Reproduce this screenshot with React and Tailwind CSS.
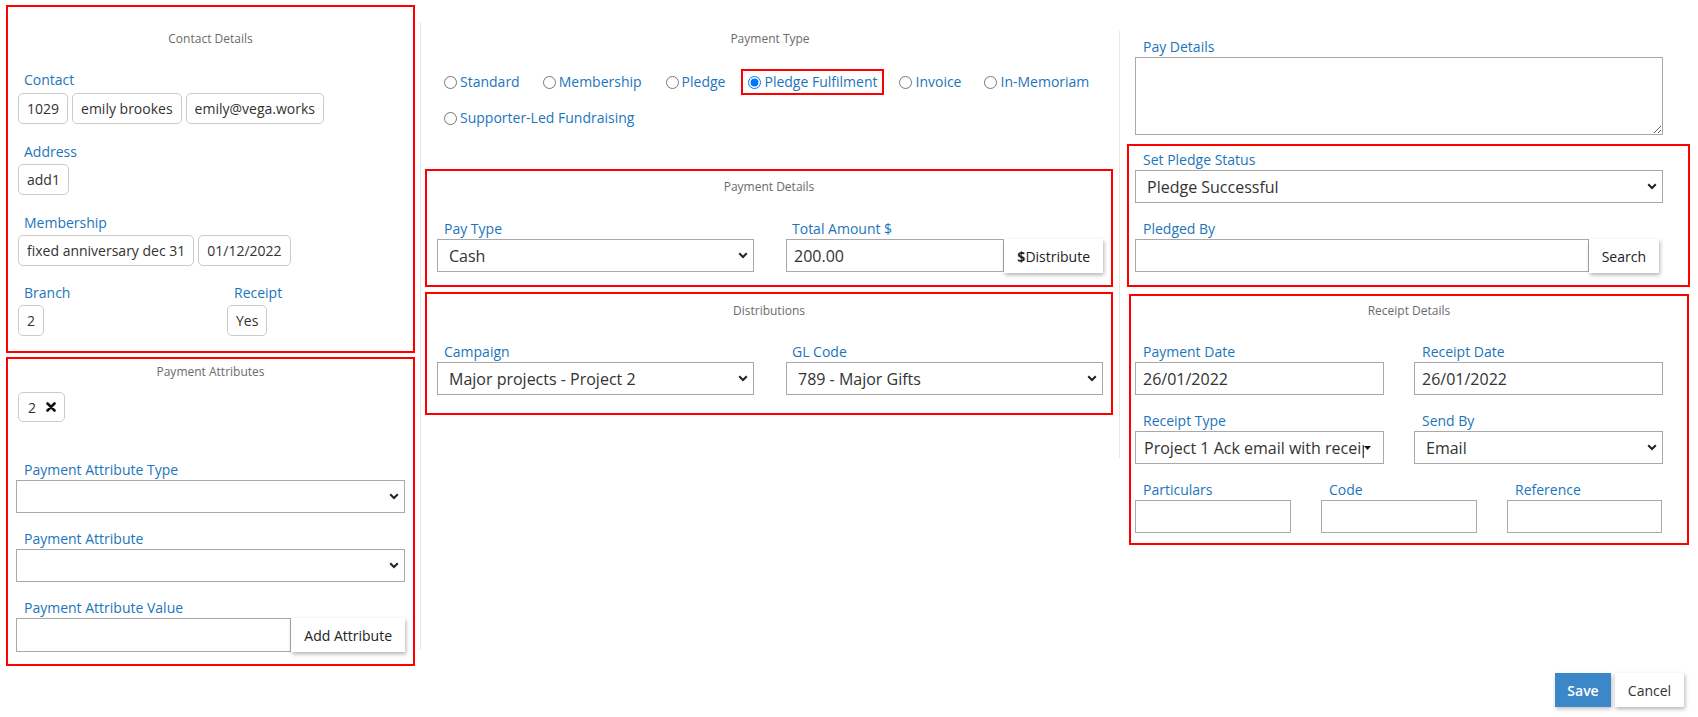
import React from "react";

const RADIOS = [
    { label: "Standard", ml: "ml-0" },
    { label: "Membership", ml: "ml-[23px]" },
    { label: "Pledge", ml: "ml-[24px]" },
    { label: "Pledge Fulfilment", ml: "ml-[16px]", checked: true },
    { label: "Invoice", ml: "ml-[15px]" },
    { label: "In-Memoriam", ml: "ml-[23px]" },
];

// ─── Small building blocks ─────────────────────────────────
const Box = ({ className = "", children }) => (
    <div className={`border-2 border-[#ff0000] ${className}`}>{children}</div>
);

const Title = ({ className = "", children }) => (
    <div className={`text-center text-[12px] leading-[16px] text-[#6b6b6b] ${className}`}>{children}</div>
);

const Label = ({ className = "", children }) => (
    <div className={`h-[20px] whitespace-nowrap text-[14px] leading-[20px] text-[#1c75bc] ${className}`}>{children}</div>
);

const Chip = ({ children }) => (
    <div className="flex h-[31px] items-center rounded-[5px] border border-[#cccccc] px-[8px] text-[14px] text-[#333]">
        {children}
    </div>
);

const Chevron = () => (
    <svg width="10" height="7" viewBox="0 0 10 7" className="shrink-0">
        <path d="M1.2 1.2 L5 5 L8.8 1.2" fill="none" stroke="#222" strokeWidth="2" />
    </svg>
);

const Select = ({ value, className = "" }) => (
    <div className={`flex h-[33px] items-center justify-between border border-[#a9a9a9] bg-white pl-[11px] pr-[5px] text-[16px] text-[#333] ${className}`}>
        <span className="whitespace-nowrap">{value}</span>
        <Chevron />
    </div>
);

const Input = ({ value = "", className = "" }) => (
    <div className={`flex h-[33px] items-center border border-[#a9a9a9] bg-white pl-[7px] text-[16px] text-[#333] ${className}`}>
        {value}
    </div>
);

const Button = ({ className = "", children }) => (
    <div className={`flex h-[34px] shrink-0 items-center bg-white px-[13px] text-[14px] text-[#222] shadow-[1px_2px_4px_rgba(0,0,0,0.3)] ${className}`}>
        {children}
    </div>
);

const Radio = ({ label, checked }) => (
    <label className="flex items-center">
        <input type="radio" name="payType" defaultChecked={checked} className="m-0 h-[13px] w-[13px]" />
        <span className="ml-[3px] whitespace-nowrap text-[14px] leading-[20px] text-[#1c75bc]">{label}</span>
    </label>
);

export default function App() {
    return (
        <div className="h-[717px] w-[1698px] overflow-hidden bg-white font-['Open_Sans',sans-serif]">
            <div className="flex items-start pl-[6px] pt-[5px]">
                {/* Left column */}
                <div className="flex w-[409px] shrink-0 flex-col gap-[4px]">
                    <Box className="h-[348px]">
                        <Title className="mt-[24px]">Contact Details</Title>
                        <div className="px-[10px]">
                            <Label className="ml-[6px] mt-[23px]">Contact</Label>
                            <div className="mt-[3px] flex gap-[4px]">
                                <Chip>1029</Chip>
                                <Chip>emily brookes</Chip>
                                <Chip>emily@vega.works</Chip>
                            </div>
                            <Label className="ml-[6px] mt-[18px]">Address</Label>
                            <div className="mt-[2px] flex">
                                <Chip>add1</Chip>
                            </div>
                            <Label className="ml-[6px] mt-[18px]">Membership</Label>
                            <div className="mt-[2px] flex gap-[4px]">
                                <Chip>fixed anniversary dec 31</Chip>
                                <Chip>01/12/2022</Chip>
                            </div>
                            <div className="mt-[17px] flex">
                                <div className="w-[209px]">
                                    <Label className="ml-[6px]">Branch</Label>
                                    <div className="mt-[2px] flex"><Chip>2</Chip></div>
                                </div>
                                <div>
                                    <Label className="ml-[7px]">Receipt</Label>
                                    <div className="mt-[2px] flex"><Chip>Yes</Chip></div>
                                </div>
                            </div>
                        </div>
                    </Box>

                    <Box className="h-[309px]">
                        <Title className="mt-[5px]">Payment Attributes</Title>
                        <div className="px-[8px]">
                            <div className="ml-[2px] mt-[12px] flex">
                                <div className="flex h-[30px] items-center gap-[10px] rounded-[5px] border border-[#cccccc] pl-[9px] pr-[8px] text-[14px] text-[#333]">
                                    <span>2</span>
                                    <svg width="10" height="10" viewBox="0 0 10 10">
                                        <path d="M1.5 1.5 L8.5 8.5 M8.5 1.5 L1.5 8.5" stroke="#111" strokeWidth="2.6" strokeLinecap="round" />
                                    </svg>
                                </div>
                            </div>
                            <Label className="ml-[8px] mt-[38px]">Payment Attribute Type</Label>
                            <Select value="" />
                            <Label className="ml-[8px] mt-[16px]">Payment Attribute</Label>
                            <Select value="" />
                            <Label className="ml-[8px] mt-[16px]">Payment Attribute Value</Label>
                            <div className="flex">
                                <Input className="h-[34px] flex-1" />
                                <Button>Add Attribute</Button>
                            </div>
                        </div>
                    </Box>
                </div>

                {/* Middle column */}
                <div className="ml-[5px] mt-[17px] h-[628px] shrink-0 border-l border-[#e6e6e6]">
                    <div className="h-[427px] w-[699px] border-r border-[#e6e6e6]">
                        <Title className="mt-[9px]">Payment Type</Title>
                        <div className="mt-[22px] flex h-[26px] items-center pl-[23px]">
                            {RADIOS.map((r) =>
                                r.checked ? (
                                    <div key={r.label} className={`flex h-[26px] items-center border-2 border-[#ff0000] pl-[5px] pr-[5px] ${r.ml}`}>
                                        <Radio label={r.label} checked />
                                    </div>
                                ) : (
                                    <div key={r.label} className={r.ml}>
                                        <Radio label={r.label} />
                                    </div>
                                )
                            )}
                        </div>
                        <div className="mt-[10px] flex h-[26px] items-center pl-[23px]">
                            <Radio label="Supporter-Led Fundraising" />
                        </div>

                        <Box className="ml-[4px] mt-[38px] h-[118px] w-[688px]">
                            <Title className="mt-[8px]">Payment Details</Title>
                            <div className="mt-[24px] grid grid-cols-[317px_317px] gap-x-[32px] pl-[10px]">
                                <div>
                                    <Label className="ml-[7px]">Pay Type</Label>
                                    <Select value="Cash" />
                                </div>
                                <div>
                                    <Label className="ml-[6px]">Total Amount $</Label>
                                    <div className="flex">
                                        <Input value="200.00" className="flex-1" />
                                        <Button className="text-[#222]">
                                            <span className="font-bold">$</span>Distribute
                                        </Button>
                                    </div>
                                </div>
                            </div>
                        </Box>

                        <Box className="ml-[4px] mt-[5px] h-[123px] w-[688px]">
                            <Title className="mt-[9px]">Distributions</Title>
                            <div className="mt-[23px] grid grid-cols-[317px_317px] gap-x-[32px] pl-[10px]">
                                <div>
                                    <Label className="ml-[7px]">Campaign</Label>
                                    <Select value="Major projects - Project 2" />
                                </div>
                                <div>
                                    <Label className="ml-[6px]">GL Code</Label>
                                    <Select value="789 - Major Gifts" />
                                </div>
                            </div>
                        </Box>
                    </div>
                </div>

                {/* Right column */}
                <div className="mt-[17px] w-[571px] shrink-0">
                    <Label className="ml-[23px] mt-[15px]">Pay Details</Label>
                    <textarea className="ml-[15px] block h-[78px] w-[528px] border border-[#a9a9a9] bg-white" />

                    <Box className="ml-[7px] mt-[9px] h-[143px] w-[563px]">
                        <div className="w-[528px] pl-[6px] box-content">
                            <Label className="ml-[8px] mt-[4px]">Set Pledge Status</Label>
                            <Select value="Pledge Successful" />
                            <Label className="ml-[8px] mt-[16px]">Pledged By</Label>
                            <div className="flex w-[524px]">
                                <Input className="flex-1" />
                                <Button>Search</Button>
                            </div>
                        </div>
                    </Box>

                    <Box className="ml-[9px] mt-[7px] h-[251px] w-[560px]">
                        <Title className="mt-[7px]">Receipt Details</Title>
                        <div className="pl-[4px]">
                            <div className="mt-[23px] grid grid-cols-[249px_249px] gap-x-[30px]">
                                <div>
                                    <Label className="ml-[8px]">Payment Date</Label>
                                    <Input value="26/01/2022" />
                                </div>
                                <div>
                                    <Label className="ml-[8px]">Receipt Date</Label>
                                    <Input value="26/01/2022" />
                                </div>
                            </div>
                            <div className="mt-[16px] grid grid-cols-[249px_249px] gap-x-[30px]">
                                <div>
                                    <Label className="ml-[8px]">Receipt Type</Label>
                                    <div className="flex h-[33px] items-center border border-[#a9a9a9] bg-white pl-[8px] pr-[12px] text-[16px] text-[#333]">
                                        <span className="flex-1 overflow-hidden whitespace-nowrap">Project 1 Ack email with receipt</span>
                                        <svg width="7" height="4" viewBox="0 0 7 4" className="shrink-0">
                                            <path d="M0 0 L7 0 L3.5 4 Z" fill="#111" />
                                        </svg>
                                    </div>
                                </div>
                                <div>
                                    <Label className="ml-[8px]">Send By</Label>
                                    <Select value="Email" />
                                </div>
                            </div>
                            <div className="mt-[16px] grid grid-cols-[156px_156px_155px] gap-x-[30px]">
                                <div>
                                    <Label className="ml-[8px]">Particulars</Label>
                                    <Input />
                                </div>
                                <div>
                                    <Label className="ml-[8px]">Code</Label>
                                    <Input />
                                </div>
                                <div>
                                    <Label className="ml-[8px]">Reference</Label>
                                    <Input />
                                </div>
                            </div>
                        </div>
                    </Box>
                </div>
            </div>

            {/* Footer buttons */}
            <div className="mt-[7px] flex justify-end gap-[4px] pr-[14px]">
                <div className="flex h-[34px] w-[56px] items-center justify-center bg-[#3b87c8] text-[14px] font-semibold text-white shadow-[1px_2px_4px_rgba(0,0,0,0.25)]">
                    Save
                </div>
                <div className="flex h-[34px] w-[69px] items-center justify-center bg-white text-[14px] text-[#333] shadow-[1px_2px_4px_rgba(0,0,0,0.3)]">
                    Cancel
                </div>
            </div>
        </div>
    );
}
